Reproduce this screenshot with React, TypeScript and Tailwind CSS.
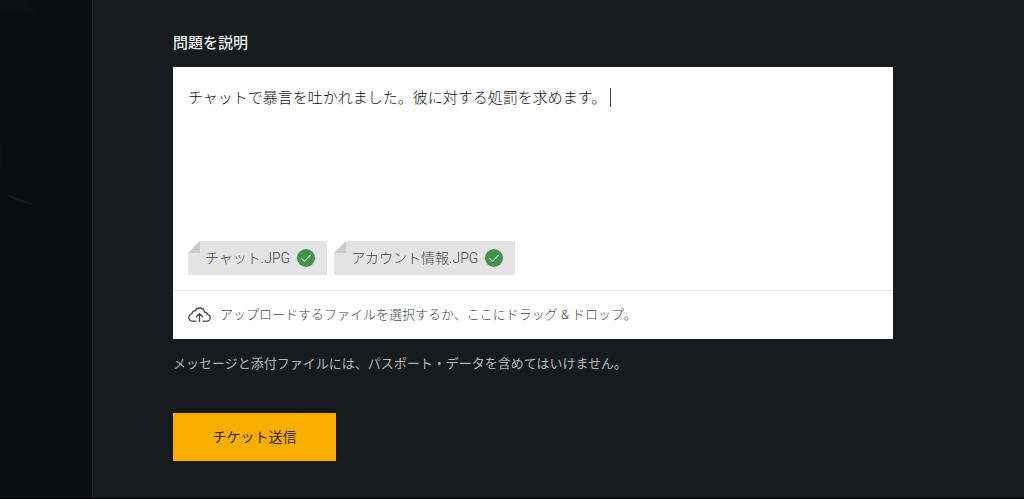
const attachments = ["チャット.JPG", "アカウント情報.JPG"];

const CheckBadge = () => (
  <svg className="h-[18px] w-[18px] shrink-0" viewBox="0 0 18 18" fill="none" aria-hidden="true">
    <circle cx="9" cy="9" r="9" fill="#43914a" />
    <path d="M4.300 9.100l3.200 3.200 6.300-6.300" stroke="#d5e8d6" strokeWidth="1.1" />
  </svg>
);

const CloudUpload = () => (
  <svg className="h-4 w-[23px] shrink-0" viewBox="0 0 23 16" fill="none" stroke="#4a4a4a" strokeWidth="1.3" strokeLinecap="round" strokeLinejoin="round" aria-hidden="true">
    <path d="M8 14.200H4.800C2.500 14.200 .8 12.700 .8 10.500c0-1.900 1.300-3.400 3.200-3.700 0-1.900 1.500-3 3.100-2.800C7.800 2 9.600 1 11.500 1c2.600 0 4.600 1.700 5 4.100 1.500-.1 2.700 .9 2.900 2.300 1.700.2 2.800 1.600 2.800 3.300 0 2-1.500 3.500-3.500 3.500H15" />
    <path d="M11.500 14.600V6.800M8.300 9.800l3.200-3.200 3.200 3.200" />
  </svg>
);

const App = () => {
  return (
    <div className="flex min-h-screen border-b border-black bg-[#171b1e] font-['Roboto','Noto_Sans_CJK_JP',sans-serif] text-white">
      {/* Side artwork */}
      <aside className="w-[93px] shrink-0 border-r border-[#1f2427] bg-[#0a0e11]">
        <svg className="h-[210px] w-[92px]" viewBox="0 0 92 210" aria-hidden="true">
          <path d="M0 0h28l14 20-18-7-24-2z" fill="#0c1013" />
          <path d="M6 194l26 9v2l-16-4z" fill="#111618" />
          <path d="M0 142l3 14-1 12h-2z" fill="#100f12" />
        </svg>
      </aside>

      <main className="min-w-0 flex-1 px-20 pt-8">
        <form className="w-full max-w-[720px]" onSubmit={(e) => e.preventDefault()}>
          <label htmlFor="problem" className="block text-[15px] leading-[22px] font-medium text-[#ededed]">
            問題を説明
          </label>

          <div className="mt-[13px] bg-white">
            <div className="relative">
              <textarea
                id="problem"
                spellCheck={false}
                defaultValue="チャットで暴言を吐かれました。彼に対する処罰を求めます。"
                className="block h-[174px] w-full resize-none bg-transparent px-[15px] pt-5 text-[15px] leading-[22px] font-light text-[#111] outline-none"
              />
              {/* Text cursor */}
              <span className="absolute top-[21px] left-[437px] h-[19px] w-px bg-[#444]" />
            </div>

            <ul className="flex flex-wrap gap-[7px] px-[15px] pb-[15px]">
              {attachments.map((name) => (
                <li key={name} className="relative flex h-[34px] items-center gap-[7px] bg-[#e3e3e3] pr-3 pl-[17px] text-[14px] leading-5 font-light text-[#444]">
                  <svg className="absolute top-0 left-0 h-3 w-3" viewBox="0 0 12 12" aria-hidden="true">
                    <path d="M0 0h12L0 12z" fill="#fff" />
                    <path d="M12 0v12H0z" fill="#cacaca" />
                  </svg>
                  {name}
                  <CheckBadge />
                </li>
              ))}
            </ul>

            <label htmlFor="files" className="flex h-[49px] cursor-pointer items-center gap-[9px] border-t border-[#e6e6e6] px-[15px] text-[13px] leading-5 font-light text-[#444]">
              <CloudUpload />
              アップロードするファイルを選択するか、ここにドラッグ & ドロップ。
              <input id="files" type="file" multiple className="sr-only" />
            </label>
          </div>

          <p className="mt-[15px] text-[13px] leading-5 text-[#b4b6b7]">
            メッセージと添付ファイルには、パスポート・データを含めてはいけません。
          </p>

          <button type="submit" className="mt-[39px] h-12 w-[163px] cursor-pointer bg-[#f7ae00] text-[14px] leading-5 text-[#30260c]">
            チケット送信
          </button>
        </form>
      </main>
    </div>
  );
};

export default App;
